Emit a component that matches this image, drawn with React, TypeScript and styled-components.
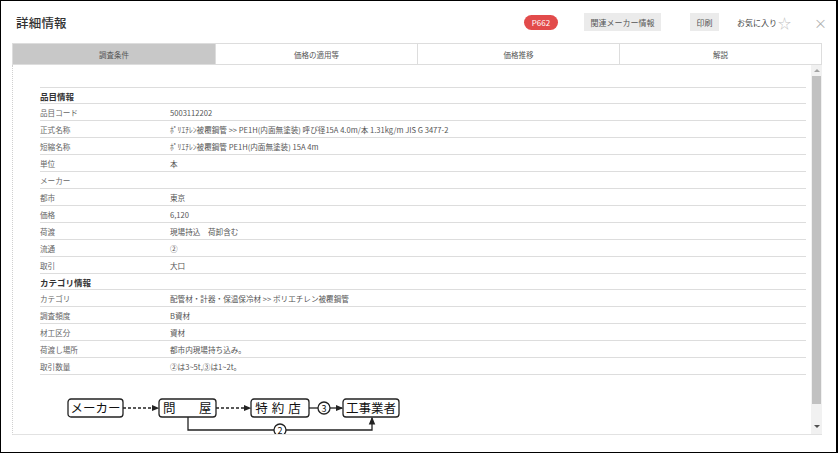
import styled, { createGlobalStyle } from 'styled-components';

const GlobalStyle = createGlobalStyle`
  html, body {
    margin: 0;
    padding: 0;
    background: #fff;
  }
  body {
    font-family: "Noto Sans CJK JP", "Noto Sans", sans-serif;
  }
`;

const Frame = styled.div`
  width: 838px;
  height: 453px;
  box-sizing: border-box;
  border: 1px solid #000;
  border-right-width: 2px;
  display: flex;
  flex-direction: column;
  overflow: hidden;
  background: #fff;
`;

const Header = styled.header`
  height: 42px;
  display: flex;
  align-items: center;
  padding: 0 9px 0 15px;
`;

const Title = styled.h1`
  flex: 1;
  margin: 0;
  font-size: 12.5px;
  font-weight: 500;
  color: #333;
  letter-spacing: 0.2px;
`;

const Badge = styled.span`
  display: inline-flex;
  align-items: center;
  justify-content: center;
  width: 34px;
  height: 15px;
  border-radius: 8px;
  background: #e24b4b;
  color: #fff;
  font-size: 8px;
  margin-right: 26px;
`;

const HeaderButton = styled.button<{ $gap: number }>`
  height: 18px;
  padding: 0 6.5px;
  border: none;
  background: #ebebeb;
  color: #555;
  font-family: inherit;
  font-size: 8px;
  margin-right: ${(p) => p.$gap}px;
  cursor: pointer;
`;

const Favorite = styled.span`
  display: inline-flex;
  align-items: center;
  font-size: 8px;
  color: #444;
  margin-right: 23px;
`;

const Star = styled.span`
  font-size: 13px;
  color: #c4c4c4;
  margin-left: 1px;
  line-height: 1;
`;

const Close = styled.span`
  font-size: 13px;
  color: #b0b0b0;
  line-height: 1;
`;

const Tabs = styled.nav`
  display: grid;
  grid-template-columns: repeat(4, 1fr);
  width: 810px;
  height: 22px;
  margin-left: 11px;
  box-sizing: border-box;
  border: 1px solid #ddd;
`;

const Tab = styled.div<{ $active?: boolean }>`
  display: flex;
  align-items: center;
  justify-content: center;
  font-size: 7.5px;
  color: #555;
  background: ${(p) => (p.$active ? '#c8c8c8' : '#fff')};
  border-left: 1px solid #ddd;
  &:first-child {
    border-left: none;
  }
`;

const Panel = styled.section`
  display: flex;
  width: 810px;
  height: 370px;
  margin-left: 11px;
  box-sizing: border-box;
  border-left: 1px dotted #d0d0d0;
  border-bottom: 1px solid #e2e2e2;
  overflow: hidden;
`;

const Content = styled.div`
  flex: 1;
  padding: 22px 5px 0 27px;
  overflow: hidden;
`;

const Table = styled.div`
  border-top: 1px solid #ddd;
`;

const Row = styled.div<{ $section?: boolean }>`
  display: grid;
  grid-template-columns: 130px 1fr;
  align-items: center;
  height: ${(p) => (p.$section ? 15 : 16)}px;
  border-bottom: 1px solid #ddd;
  font-size: ${(p) => (p.$section ? 8.5 : 7.6)}px;
  font-weight: ${(p) => (p.$section ? 700 : 400)};
  color: ${(p) => (p.$section ? '#333' : '#666')};
`;

const Value = styled.span`
  color: #555;
  white-space: nowrap;
`;

const Diagram = styled.svg`
  display: block;
  margin: 20px 0 0 26px;
`;

const ScrollBar = styled.div`
  width: 11px;
  display: flex;
  flex-direction: column;
  align-items: center;
  background: #f1f1f1;
`;

const ScrollArrow = styled.div<{ $down?: boolean }>`
  height: ${(p) => (p.$down ? 'auto' : '11px')};
  display: flex;
  align-items: center;
  justify-content: center;
  padding-bottom: ${(p) => (p.$down ? '6px' : '0')};
  &::after {
    content: '';
    border-left: 3px solid transparent;
    border-right: 3px solid transparent;
    ${(p) =>
      p.$down
        ? 'border-top: 3px solid #505050;'
        : 'border-bottom: 3px solid #a3a3a3;'}
  }
`;

const Thumb = styled.div`
  width: 9px;
  height: 328px;
  background: #c1c1c1;
  margin-bottom: auto;
`;

type Item = { label: string; value?: string; section?: boolean };

const items: Item[] = [
  { label: '品目情報', section: true },
  { label: '品目コード', value: '5003112202' },
  {
    label: '正式名称',
    value: 'ﾎﾟﾘｴﾁﾚﾝ被覆鋼管 >> PE1H(内面無塗装) 呼び径15A 4.0m/本 1.31kg/m JIS G 3477-2',
  },
  { label: '短縮名称', value: 'ﾎﾟﾘｴﾁﾚﾝ被覆鋼管 PE1H(内面無塗装) 15A 4m' },
  { label: '単位', value: '本' },
  { label: 'メーカー', value: '' },
  { label: '都市', value: '東京' },
  { label: '価格', value: '6,120' },
  { label: '荷渡', value: '現場持込　荷卸含む' },
  { label: '流通', value: '②' },
  { label: '取引', value: '大口' },
  { label: 'カテゴリ情報', section: true },
  { label: 'カテゴリ', value: '配管材・計器・保温保冷材 >> ポリエチレン被覆鋼管' },
  { label: '調査頻度', value: 'B資材' },
  { label: '材工区分', value: '資材' },
  { label: '荷渡し場所', value: '都市内現場持ち込み。' },
  { label: '取引数量', value: '②は3~5t,③は1~2t。' },
];

const tabs = ['調査条件', '価格の適用等', '価格推移', '解説'];

const boxFont = '"Noto Sans CJK JP", sans-serif';

const FlowDiagram = () => (
  <Diagram width="345" height="44" viewBox="0 0 345 44">
    <defs>
      <marker id="arr" markerWidth="6" markerHeight="6" refX="5" refY="3" orient="auto">
        <path d="M0,0.5 L6,3 L0,5.5 Z" fill="#222" />
      </marker>
    </defs>
    <g fill="none" stroke="#222" strokeWidth="1.3">
      <rect x="2" y="4" width="55" height="18" rx="3" />
      <rect x="93" y="4" width="57" height="18" rx="3" />
      <rect x="185" y="4" width="58" height="18" rx="3" />
      <rect x="277" y="4" width="56" height="18" rx="3" />
      <line x1="57" y1="13" x2="92" y2="13" strokeDasharray="3 2" markerEnd="url(#arr)" />
      <line x1="150" y1="13" x2="184" y2="13" strokeDasharray="3 2" markerEnd="url(#arr)" />
      <line x1="243" y1="13" x2="252" y2="13" />
      <circle cx="258" cy="13" r="6" />
      <line x1="264" y1="13" x2="276" y2="13" markerEnd="url(#arr)" />
      <polyline points="122,22 122,35 208,35" />
      <circle cx="214" cy="35" r="6" />
      <polyline points="220,35 306,35 306,23" markerEnd="url(#arr)" />
    </g>
    <g fontFamily={boxFont} fontSize="12.5" fill="#111">
      <text x="29.5" y="17.5" textAnchor="middle">メーカー</text>
      <text x="97" y="17.5">問</text>
      <text x="133" y="17.5">屋</text>
      <text x="214" y="17.5" textAnchor="middle" letterSpacing="4">特約店</text>
      <text x="305" y="17.5" textAnchor="middle">工事業者</text>
      <text x="258" y="16.5" textAnchor="middle" fontSize="9">3</text>
      <text x="214" y="38.5" textAnchor="middle" fontSize="9">2</text>
    </g>
  </Diagram>
);

export default function App() {
  return (
    <>
      <GlobalStyle />
      <Frame>
        <Header>
          <Title>詳細情報</Title>
          <Badge>P662</Badge>
          <HeaderButton $gap={29}>関連メーカー情報</HeaderButton>
          <HeaderButton $gap={18}>印刷</HeaderButton>
          <Favorite>
            お気に入り<Star>☆</Star>
          </Favorite>
          <Close>×</Close>
        </Header>
        <Tabs>
          {tabs.map((t, i) => (
            <Tab key={t} $active={i === 0}>
              {t}
            </Tab>
          ))}
        </Tabs>
        <Panel>
          <Content>
            <Table>
              {items.map((it) => (
                <Row key={it.label} $section={it.section}>
                  <span>{it.label}</span>
                  {!it.section && <Value>{it.value}</Value>}
                </Row>
              ))}
            </Table>
            <FlowDiagram />
          </Content>
          <ScrollBar>
            <ScrollArrow />
            <Thumb />
            <ScrollArrow $down />
          </ScrollBar>
        </Panel>
      </Frame>
    </>
  );
}
